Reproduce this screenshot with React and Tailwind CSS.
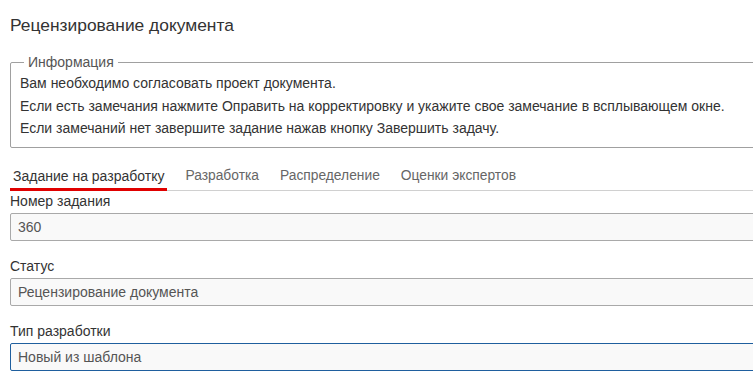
const TABS = ['Задание на разработку', 'Разработка', 'Распределение', 'Оценки экспертов']

const FIELDS = [
  { label: 'Номер задания', value: '360' },
  { label: 'Статус', value: 'Рецензирование документа' },
  { label: 'Тип разработки', value: 'Новый из шаблона', focused: true },
]

function Field({ label, value, focused }) {
  return (
    <div className="flex flex-col">
      <label className="text-[14px] leading-[20px] text-[#333]">{label}</label>
      <div
        className={
          focused
            ? 'mt-[2px] h-[28px] border border-[#1f5f9e] bg-[#f9f9f9] px-[7px] text-[14px] leading-[26px] text-[#555] rounded-[2px]'
            : 'mt-[2px] h-[28px] border border-[#a9a9a9] bg-[#f9f9f9] px-[7px] text-[14px] leading-[26px] text-[#555] rounded-[2px]'
        }
      >
        {value}
      </div>
    </div>
  )
}

export default function App() {
  return (
    <div className="w-[753px] h-[373px] overflow-hidden bg-white" style={{ fontFamily: '"Liberation Sans", Arial, sans-serif' }}>
      <div className="w-[820px] pl-[10px]">
        <h1 className="pt-[13px] text-[17.4px] leading-[24px] text-[#333]">Рецензирование документа</h1>

        <fieldset className="mt-[15px] border border-[#a0a0a0] px-[9px] pb-[7px] rounded-[2px]">
          <legend className="ml-[4px] px-[4px] text-[14px] leading-[20px] text-[#555]">Информация</legend>
          <p className="text-[14px] leading-[22.5px] text-[#333]">Вам необходимо согласовать проект документа.</p>
          <p className="text-[14px] leading-[22.5px] text-[#333]">Если есть замечания нажмите Оправить на корректировку и укажите свое замечание в всплывающем окне.</p>
          <p className="text-[14px] leading-[22.5px] text-[#333]">Если замечаний нет завершите задание нажав кнопку Завершить задачу.</p>
        </fieldset>

        <div className="mt-[18px] flex gap-[15px] border-b border-[#d0d0d0]">
          {TABS.map((t, i) => (
            <div
              key={t}
              className={
                i === 0
                  ? '-mb-px px-[3px] pb-[2px] border-b-[3px] border-[#e00000] text-[14px] leading-[20px] text-[#333]'
                  : '-mb-px px-[3px] pb-[2px] border-b-[3px] border-transparent text-[13.8px] leading-[20px] text-[#666]'
              }
            >
              {t}
            </div>
          ))}
        </div>

        <div className="flex flex-col gap-[15px]">
          {FIELDS.map((f) => <Field key={f.label} {...f} />)}
        </div>
      </div>
    </div>
  )
}
